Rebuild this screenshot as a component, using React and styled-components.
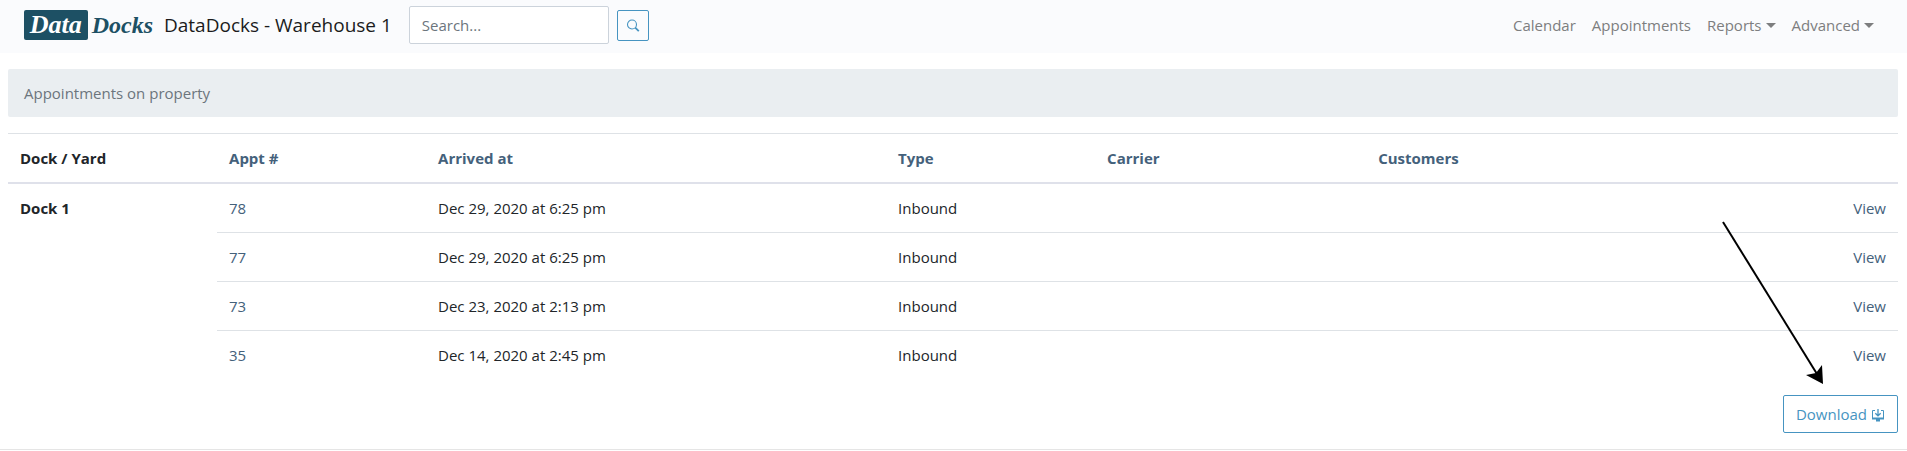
import React from 'react';
import styled, { createGlobalStyle } from 'styled-components';

const GlobalStyle = createGlobalStyle`
  *, *::before, *::after { box-sizing: border-box; }
  body {
    margin: 0;
    background: #fff;
    color: #212529;
    font: 400 15px/24px 'Open Sans', 'Noto Sans', sans-serif;
  }
  a { color: #44617b; text-decoration: none; }
`;

const Navbar = styled.header`
  display: flex;
  align-items: center;
  padding: 6px 24px 9px;
  background: #fafbfd;
`;

const Brand = styled.a`
  display: flex;
  align-items: center;
  gap: 11px;
  margin-right: 17px;
  color: #1b1b1c;
  font-size: 19px;
  white-space: nowrap;
`;

const Logo = styled.span`
  display: flex;
  align-items: center;
  width: 129px;
  height: 30px;
  color: #1d5064;
  font: italic 700 24px/30px 'Liberation Serif', serif;
`;

const LogoPlate = styled.span`
  width: 65px;
  margin-right: 4px;
  border-radius: 2px;
  background: #1d5064;
  color: #fff;
  font-size: 26px;
  text-align: center;
`;

const SearchForm = styled.form`
  display: flex;
  align-items: center;
  gap: 8px;
`;

const SearchInput = styled.input`
  width: 200px;
  height: 38px;
  padding: 6px 12px;
  border: 1px solid #ccd3db;
  border-radius: 2px;
  background: #fff;
  color: #495057;
  font: inherit;
  &::placeholder { color: #6c757d; opacity: 1; }
`;

const OutlineButton = styled.button`
  display: inline-flex;
  align-items: center;
  justify-content: center;
  gap: 4px;
  height: ${(p) => (p.$small ? '31px' : '38px')};
  padding: 0 ${(p) => (p.$small ? '8px' : '12px')};
  border: 1px solid #4694c1;
  border-radius: 2px;
  background: transparent;
  color: #4694c1;
  font: inherit;
`;

const Nav = styled.nav`
  display: flex;
  gap: 16px;
  margin-left: auto;
  padding-right: 9px;
`;

const NavLink = styled.a`
  display: flex;
  align-items: center;
  gap: 4px;
  color: #7d7e7f;
`;

const Caret = styled.span`
  border: 5px solid transparent;
  border-top-color: currentColor;
  border-bottom: 0;
`;

const Main = styled.main`
  padding: 16px 9px 16px 8px;
`;

const Breadcrumb = styled.div`
  margin-bottom: 16px;
  padding: 12px 16px;
  border-radius: 2px;
  background: #eaeef1;
  color: #6c757d;
`;

const Table = styled.table`
  width: 100%;
  margin-bottom: 16px;
  border-spacing: 0;
  table-layout: fixed;
`;

const Col = styled.col`
  width: ${(p) => p.$width};
`;

const Cell = styled.td`
  padding: 12px;
  border-top: 1px solid #dee2e6;
  text-align: ${(p) => (p.$end ? 'right' : 'left')};
  vertical-align: top;
  tr:first-child > & { border-top: 0; }
`;

const HeadCell = styled.th`
  padding: 12px;
  border-top: 1px solid #dee2e6;
  border-bottom: 2px solid #dfe1ea;
  font-weight: 700;
  text-align: left;
`;

const Actions = styled.div`
  position: relative;
  display: flex;
  justify-content: flex-end;
`;

const Pointer = styled.svg`
  position: absolute;
  right: 74px;
  bottom: 48px;
  pointer-events: none;
`;

const Rule = styled.hr`
  margin: 0;
  border: 0;
  border-top: 1px solid #e5e5e5;
`;

const columns = ['Appt #', 'Arrived at', 'Type', 'Carrier', 'Customers'];
const widths = ['11.06%', '11.06%', '24.34%', '11.06%', '14.34%', 'auto', '11.06%'];
const rows = [
  ['78', 'Dec 29, 2020 at 6:25 pm'],
  ['77', 'Dec 29, 2020 at 6:25 pm'],
  ['73', 'Dec 23, 2020 at 2:13 pm'],
  ['35', 'Dec 14, 2020 at 2:45 pm'],
];

const SearchIcon = () => (
  <svg width="14" height="14" viewBox="0 0 14 14" fill="none" stroke="currentColor" aria-hidden="true">
    <circle cx="6" cy="6.5" r="4.5" strokeWidth="1.1" />
    <path d="M9.2 9.7L12.8 13.2" strokeWidth="1.8" />
  </svg>
);

const DownloadIcon = () => (
  <svg width="14" height="16" viewBox="0 0 14 16" fill="none" stroke="currentColor" aria-hidden="true">
    <path d="M4 4.5H1.5V12M10 4.5H12.5V12" strokeWidth="1" />
    <path d="M1 12.5H13M5 14.5H9" strokeWidth="2" />
    <path d="M7 3V9.5M4.3 7.2L7 9.8L9.7 7.2" strokeWidth="1.3" />
  </svg>
);

export default function App() {
  return (
    <>
      <GlobalStyle />
      <Navbar>
        <Brand href="#">
          <Logo><LogoPlate>Data</LogoPlate>Docks</Logo>
          DataDocks - Warehouse 1
        </Brand>
        <SearchForm role="search">
          <SearchInput type="search" placeholder="Search..." aria-label="Search" />
          <OutlineButton $small type="submit" aria-label="Search"><SearchIcon /></OutlineButton>
        </SearchForm>
        <Nav>
          <NavLink href="#">Calendar</NavLink>
          <NavLink href="#">Appointments</NavLink>
          <NavLink href="#">Reports<Caret /></NavLink>
          <NavLink href="#">Advanced<Caret /></NavLink>
        </Nav>
      </Navbar>
      <Main>
        <Breadcrumb>Appointments on property</Breadcrumb>
        <Table>
          <colgroup>{widths.map((w, i) => <Col key={i} $width={w} />)}</colgroup>
          <thead>
            <tr>
              <HeadCell scope="col">Dock / Yard</HeadCell>
              {columns.map((c) => <HeadCell scope="col" key={c}><a href="#">{c}</a></HeadCell>)}
              <HeadCell as="td" />
            </tr>
          </thead>
          <tbody>
            {rows.map(([id, date], i) => (
              <tr key={id}>
                {i === 0 && <Cell as="th" scope="rowgroup" rowSpan={rows.length}>Dock 1</Cell>}
                <Cell><a href="#">{id}</a></Cell>
                <Cell>{date}</Cell>
                <Cell>Inbound</Cell>
                <Cell />
                <Cell />
                <Cell $end><a href="#">View</a></Cell>
              </tr>
            ))}
          </tbody>
        </Table>
        <Actions>
          <OutlineButton type="button">Download <DownloadIcon /></OutlineButton>
          <Pointer width="102" height="164" viewBox="0 0 102 164" aria-hidden="true">
            <path d="M1 1L95 153" stroke="#000" strokeWidth="2" />
            <path d="M101 163L84 154L94 152L100 144Z" fill="#000" />
          </Pointer>
        </Actions>
      </Main>
      <Rule />
    </>
  );
}
